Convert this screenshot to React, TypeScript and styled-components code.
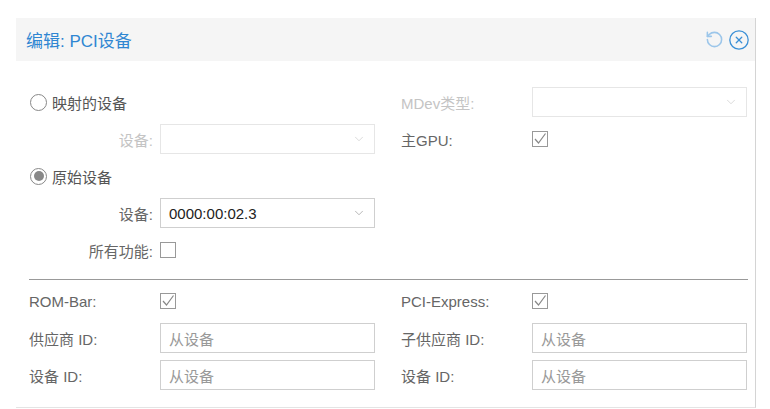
import React from 'react';
import styled, { createGlobalStyle } from 'styled-components';
import { RotateCcw, CircleX, ChevronDown } from 'lucide-react';

const Global = createGlobalStyle`
    body {
        margin: 0;
        background: #fff;
        font-family: "Liberation Sans", "Noto Sans CJK SC", sans-serif;
        font-size: 15px;
        color: #555;
    }
`;

const Panel = styled.div`
    margin: 18px 0 0 16px;
    width: 739px;
    border-right: 1px solid #d4d4d4;
    border-bottom: 1px solid #e4e4e4;
`;

const Header = styled.div`
    height: 43px;
    background: #f5f5f5;
    display: flex;
    align-items: center;
    padding: 0 5px 0 10px;
`;

const Title = styled.div`
    flex: 1;
    font-size: 17px;
    color: #2f86d2;
`;

const Tools = styled.div`
    display: flex;
    gap: 4px;
    align-items: center;
`;

const Body = styled.div`
    padding: 26px 7px 17px 13px;
`;

const Columns = styled.div`
    display: grid;
    grid-template-columns: 346px 346px;
    column-gap: 26px;
`;

const Stack = styled.div`
    display: flex;
    flex-direction: column;
    gap: 7px;
`;

const Row = styled.div`
    display: flex;
    align-items: center;
    height: 30px;
`;

const Label = styled.div<{ $right?: boolean; $disabled?: boolean }>`
    width: ${p => (p.$right ? '124px' : '131px')};
    margin-right: ${p => (p.$right ? '7px' : '0')};
    text-align: ${p => (p.$right ? 'right' : 'left')};
    color: ${p => (p.$disabled ? '#c4c4c4' : '#666')};
    flex-shrink: 0;
`;

const Field = styled.div<{ $disabled?: boolean }>`
    width: 215px;
    height: 30px;
    box-sizing: border-box;
    border: 1px solid ${p => (p.$disabled ? '#e6e6e6' : '#cfcfcf')};
    display: flex;
    align-items: center;
    padding: 0 8px;
    color: #222;
`;

const Value = styled.span`
    flex: 1;
`;

const Placeholder = styled.span`
    color: #999;
`;

const Radio = styled.span<{ $on?: boolean }>`
    width: 17px;
    height: 17px;
    border-radius: 50%;
    border: 1px solid #888;
    box-sizing: border-box;
    margin: 0 5px 0 1px;
    display: inline-flex;
    align-items: center;
    justify-content: center;
    &::after {
        content: '';
        display: ${p => (p.$on ? 'block' : 'none')};
        width: 10px;
        height: 10px;
        border-radius: 50%;
        background: #888;
    }
`;

const RadioText = styled.span`
    color: #555;
`;

const Box = styled.span`
    width: 16px;
    height: 16px;
    border: 1px solid #999;
    box-sizing: border-box;
    display: inline-flex;
    align-items: center;
    justify-content: center;
`;

const Rule = styled.hr`
    border: 0;
    border-top: 1px solid #999;
    margin: 14px 0 6px;
`;

const Check = ({ on }: { on?: boolean }) => (
    <Box>
        {on && (
            <svg width="14" height="14" viewBox="0 0 14 14">
                <path d="M2 7 L5.5 11 L12.5 1.5" stroke="#888" strokeWidth="1.2" fill="none" />
            </svg>
        )}
    </Box>
);

const Select = ({ value, disabled }: { value?: string; disabled?: boolean }) => (
    <Field $disabled={disabled}>
        <Value>{value}</Value>
        <ChevronDown size={14} color={disabled ? '#ccc' : '#999'} strokeWidth={1.2} />
    </Field>
);

const App = () => (
    <>
        <Global />
        <Panel>
            <Header>
                <Title>编辑: PCI设备</Title>
                <Tools>
                    <RotateCcw size={19} color="#9cc6ea" strokeWidth={2} />
                    <CircleX size={22} color="#3a8fd6" strokeWidth={1.4} />
                </Tools>
            </Header>
            <Body>
                <Columns>
                    <Stack>
                        <Row>
                            <Radio />
                            <RadioText>映射的设备</RadioText>
                        </Row>
                        <Row>
                            <Label $right $disabled>设备:</Label>
                            <Select disabled />
                        </Row>
                        <Row>
                            <Radio $on />
                            <RadioText>原始设备</RadioText>
                        </Row>
                        <Row>
                            <Label $right>设备:</Label>
                            <Select value="0000:00:02.3" />
                        </Row>
                        <Row>
                            <Label $right>所有功能:</Label>
                            <Check />
                        </Row>
                    </Stack>
                    <Stack>
                        <Row>
                            <Label $disabled>MDev类型:</Label>
                            <Select disabled />
                        </Row>
                        <Row>
                            <Label>主GPU:</Label>
                            <Check on />
                        </Row>
                    </Stack>
                </Columns>
                <Rule />
                <Columns>
                    <Stack>
                        <Row>
                            <Label>ROM-Bar:</Label>
                            <Check on />
                        </Row>
                        <Row>
                            <Label>供应商 ID:</Label>
                            <Field><Placeholder>从设备</Placeholder></Field>
                        </Row>
                        <Row>
                            <Label>设备 ID:</Label>
                            <Field><Placeholder>从设备</Placeholder></Field>
                        </Row>
                    </Stack>
                    <Stack>
                        <Row>
                            <Label>PCI-Express:</Label>
                            <Check on />
                        </Row>
                        <Row>
                            <Label>子供应商 ID:</Label>
                            <Field><Placeholder>从设备</Placeholder></Field>
                        </Row>
                        <Row>
                            <Label>设备 ID:</Label>
                            <Field><Placeholder>从设备</Placeholder></Field>
                        </Row>
                    </Stack>
                </Columns>
            </Body>
        </Panel>
    </>
);

export default App;
